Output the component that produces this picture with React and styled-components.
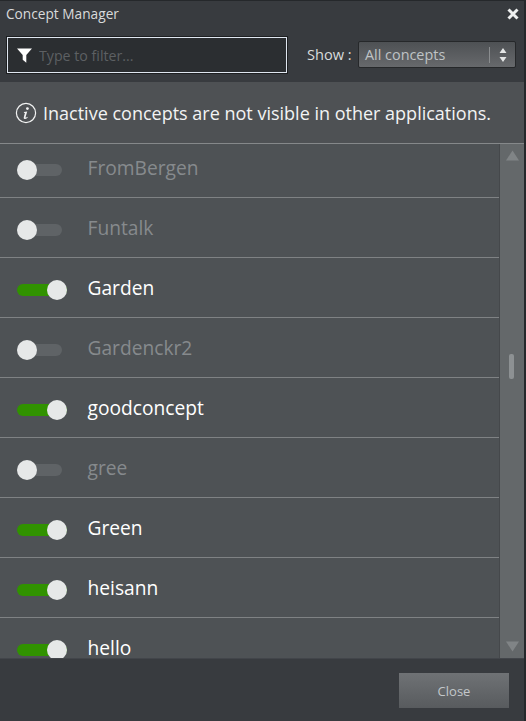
import React from "react";
import styled, { createGlobalStyle } from "styled-components";

const concepts = [
  { name: "FromBergen", on: false },
  { name: "Funtalk", on: false },
  { name: "Garden", on: true },
  { name: "Gardenckr2", on: false },
  { name: "goodconcept", on: true },
  { name: "gree", on: false },
  { name: "Green", on: true },
  { name: "heisann", on: true },
  { name: "hello", on: true },
];

const App = () => {
  return (
    <>
      <Global />
      <Dialog>
        <TitleBar>
          <Title>Concept Manager</Title>
          <CloseX viewBox="0 0 12 12">
            <path d="M1.5 1.5 L10.5 10.5 M10.5 1.5 L1.5 10.5" />
          </CloseX>
        </TitleBar>
        <Toolbar>
          <Filter>
            <svg width="15" height="15" viewBox="0 0 15 15">
              <path d="M0 0.5 H15 L9.3 7 V14.8 L5.7 11.8 V7 Z" fill="#fff" />
            </svg>
            <FilterInput placeholder="Type to filter..." />
          </Filter>
          <ShowLabel>Show :</ShowLabel>
          <Select>
            <span>All concepts</span>
            <SelectArrows>
              <svg width="8" height="16" viewBox="0 0 8 16">
                <path d="M4 1 L7.5 6 H0.5 Z M0.5 10 H7.5 L4 15 Z" fill="#e4e6e6" />
              </svg>
            </SelectArrows>
          </Select>
        </Toolbar>
        <Notice>
          <svg width="22" height="22" viewBox="0 0 22 22">
            <circle cx="11" cy="11" r="9.6" fill="none" stroke="#f2f3f3" strokeWidth="1.2" />
            <circle cx="12.4" cy="6.6" r="1.4" fill="#f2f3f3" />
            <path d="M8.9 10 L12.2 9.4 L10.6 15 Q10.5 15.9 11.3 15.6 L12.6 14.8 L12.7 15.4 Q11 17 9.6 16.9 Q8.4 16.7 8.8 15.2 L9.9 11 L8.9 10.8 Z" fill="#f2f3f3" />
          </svg>
          <span>Inactive concepts are not visible in other applications.</span>
        </Notice>
        <ListArea>
          <List>
            <ListInner>
              {concepts.map((c) => (
                <Row key={c.name}>
                  <Toggle $on={c.on}>
                    <Knob $on={c.on} />
                  </Toggle>
                  <Name $on={c.on}>{c.name}</Name>
                </Row>
              ))}
            </ListInner>
          </List>
          <Scrollbar>
            <Arrow viewBox="0 0 14 11">
              <path d="M7 0 L14 11 H0 Z" />
            </Arrow>
            <Track>
              <Thumb />
            </Track>
            <Arrow viewBox="0 0 14 11">
              <path d="M0 0 H14 L7 11 Z" />
            </Arrow>
          </Scrollbar>
        </ListArea>
        <Footer>
          <CloseButton>Close</CloseButton>
        </Footer>
      </Dialog>
    </>
  );
};

export default App;

const Global = createGlobalStyle`
  html, body {
    margin: 0;
    padding: 0;
    background: #24272a;
  }
  * {
    box-sizing: border-box;
  }
`;

const Dialog = styled.div`
  width: 526px;
  height: 721px;
  display: flex;
  flex-direction: column;
  background: #383b3f;
  border-top: 1px solid #25282b;
  border-right: 2px solid #25282b;
  font-family: "Open Sans", sans-serif;
  overflow: hidden;
`;

const TitleBar = styled.div`
  height: 27px;
  display: flex;
  align-items: center;
  justify-content: space-between;
  padding: 0 5px 2px 6px;
  flex: none;
`;

const Title = styled.div`
  font-size: 13.7px;
  color: #d8dadb;
`;

const CloseX = styled.svg`
  width: 12px;
  height: 12px;
  fill: none;
  stroke: #eef0f0;
  stroke-width: 3;
`;

const Toolbar = styled.div`
  height: 54px;
  flex: none;
  display: flex;
  align-items: flex-start;
  padding: 9px 8px 0 7px;
`;

const Filter = styled.div`
  width: 280px;
  height: 36px;
  display: flex;
  align-items: center;
  gap: 7px;
  padding: 0 9px;
  background: #2b2e31;
  border: 1px solid #dfe6f0;
  outline: 1px solid #1d1f21;
`;

const FilterInput = styled.input`
  flex: 1;
  min-width: 0;
  padding: 0;
  background: none;
  border: none;
  outline: none;
  font-family: "Open Sans", sans-serif;
  font-size: 14.2px;
  color: #e0e0e0;
  &::placeholder {
    color: #5d6063;
    opacity: 1;
  }
`;

const ShowLabel = styled.div`
  margin: 7px 0 0 20px;
  font-size: 14.6px;
  color: #d9dbdc;
  width: 51px;
`;

const Select = styled.div`
  width: 158px;
  height: 27px;
  margin-top: 4px;
  display: flex;
  align-items: center;
  justify-content: space-between;
  padding: 0 5px 0 6px;
  border: 1px solid #26282a;
  border-radius: 2px;
  background: linear-gradient(#4e5154, #67696c);
  color: #bfc3c5;
  font-size: 14.4px;
`;

const SelectArrows = styled.div`
  display: flex;
  align-items: center;
  height: 16px;
  padding-left: 9px;
  margin-right: 3px;
  border-left: 1px solid #8a8d8f;
`;

const Notice = styled.div`
  height: 62px;
  flex: none;
  display: flex;
  align-items: center;
  gap: 6px;
  padding: 0 15px;
  background: #4e5154;
  border-bottom: 1px solid #85888a;
  color: #f2f3f3;
  font-size: 18px;
  white-space: nowrap;
`;

const ListArea = styled.div`
  flex: 1;
  min-height: 0;
  display: flex;
  background: #4e5255;
`;

const List = styled.div`
  flex: 1;
  overflow: hidden;
`;

const ListInner = styled.div`
  margin-top: -6px;
`;

const Row = styled.div`
  height: 60px;
  display: flex;
  align-items: center;
  padding-left: 17px;
  border-bottom: 1px solid #7f8284;
`;

const Toggle = styled.div`
  position: relative;
  width: ${(p) => (p.$on ? "50px" : "45px")};
  height: 12px;
  margin-top: 4px;
  border-radius: 6px;
  background: ${(p) => (p.$on ? "#319200" : "#5f6366")};
`;

const Knob = styled.div`
  position: absolute;
  top: -4px;
  ${(p) => (p.$on ? "right: 0;" : "left: 0;")}
  width: 20px;
  height: 20px;
  border-radius: 50%;
  background: #e6e8e8;
`;

const Name = styled.div`
  margin-left: ${(p) => (p.$on ? "20.5px" : "25.5px")};
  font-size: 19.2px;
  line-height: 18px;
  color: ${(p) => (p.$on ? "#ffffff" : "#868a8d")};
`;

const Scrollbar = styled.div`
  width: 25px;
  flex: none;
  display: flex;
  flex-direction: column;
  align-items: center;
  justify-content: space-between;
  padding: 6px 0;
  background: #64686a;
  border-left: 1px solid #45484b;
`;

const Arrow = styled.svg`
  width: 13px;
  height: 11px;
  fill: #808486;
  flex: none;
`;

const Track = styled.div`
  flex: 1;
  position: relative;
  width: 100%;
`;

const Thumb = styled.div`
  position: absolute;
  top: 193px;
  left: 9px;
  width: 5px;
  height: 25px;
  border-radius: 2px;
  background: #8d9193;
`;

const Footer = styled.div`
  flex: 1;
  max-height: 63px;
  min-height: 63px;
  display: flex;
  justify-content: flex-end;
  align-items: flex-start;
  padding: 14px 15px 0 0;
  background: #383b3f;
  border-top: 1px solid #42454a;
`;

const CloseButton = styled.button`
  width: 110px;
  height: 35px;
  border: none;
  background: linear-gradient(#6f7275, #585b5e);
  color: #c3c7ca;
  font-family: "Open Sans", sans-serif;
  font-size: 13px;
`;
